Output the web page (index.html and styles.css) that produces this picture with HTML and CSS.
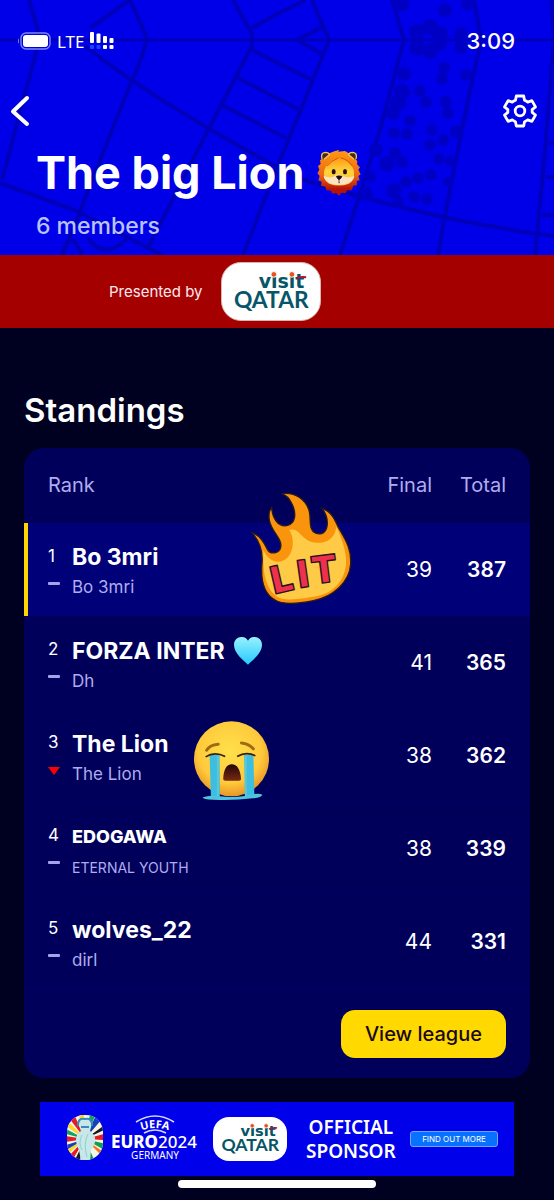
FILE: index.html
```html
<!DOCTYPE html>
<html lang="en">
<head>
<meta charset="utf-8">
<meta name="viewport" content="width=device-width, initial-scale=1">
<title>The big Lion</title>
<link rel="stylesheet" href="styles.css">
</head>
<body>
<header class="hero">
  <svg class="hero-map" viewBox="0 0 554 255" preserveAspectRatio="xMidYMid slice" aria-hidden="true">
    <g fill="none" stroke="#0000b9" stroke-width="4">
      <path stroke-width="3" d="M0 40H554"/>
      <path d="M29 0L40 38L22 105L2 180"/>
      <path d="M130 0L90 28M85 46Q130 82 208 128T305 180Q430 220 554 236"/>
      <path d="M130 0L147 38Q142 60 130 85L98 165L75 225L62 255"/>
      <path d="M0 183L75 210L162 255"/>
      <path d="M233 0L252 34L252 46L208 130L148 248"/>
      <path d="M252 28L277 14L306 0M252 50L312 80M238 78L300 110M222 105L286 138"/>
      <path d="M312 0L329 40L300 112L280 160L243 255"/>
      <path d="M322 27L297 40L322 54"/>
      <path d="M392 0L404 40L380 130L358 200L340 255"/>
      <path d="M474 0L481 40L466 110L445 215L438 255"/>
      <path d="M551 0L554 38L545 150L535 255M549 143H554M546 177H554M542 215H554"/>
      <path d="M62 255Q70 225 82 255M88 238Q105 262 127 238"/>
    </g>
    <g fill="#0000c4">
      <circle cx="401" cy="4" r="8"/><circle cx="445" cy="10" r="7"/><circle cx="468" cy="4" r="7"/>
      <circle cx="417" cy="32" r="8"/><circle cx="430" cy="27" r="8"/><circle cx="440" cy="34" r="8"/><circle cx="417" cy="48" r="8"/><circle cx="430" cy="51" r="8"/><circle cx="439" cy="43" r="8"/>
      <circle cx="461" cy="34" r="7"/><circle cx="461" cy="47" r="7"/><circle cx="404" cy="74" r="7"/>
      <circle cx="444" cy="68" r="6"/><circle cx="442" cy="79" r="6"/><circle cx="466" cy="75" r="6"/>
      <circle cx="402" cy="92" r="8"/><circle cx="398" cy="103" r="8"/><circle cx="393" cy="113" r="7"/>
      <circle cx="420" cy="91" r="6"/><circle cx="426" cy="102" r="6"/><circle cx="446" cy="102" r="6"/><circle cx="448" cy="113" r="6"/>
      <circle cx="410" cy="121" r="6"/><circle cx="407" cy="134" r="6"/><circle cx="394" cy="133" r="6"/>
      <circle cx="432" cy="130" r="6"/><circle cx="430" cy="145" r="6"/><circle cx="443" cy="140" r="6"/><circle cx="457" cy="132" r="7"/>
      <circle cx="376" cy="150" r="7"/><circle cx="395" cy="153" r="6"/><circle cx="387" cy="164" r="8"/><circle cx="402" cy="162" r="6"/>
      <circle cx="439" cy="159" r="6"/><circle cx="450" cy="161" r="5"/><circle cx="370" cy="177" r="6"/><circle cx="406" cy="182" r="6"/>
      <circle cx="418" cy="178" r="6"/><circle cx="431" cy="175" r="6"/><circle cx="394" cy="191" r="8"/><circle cx="414" cy="197" r="6"/><circle cx="427" cy="199" r="6"/>
      <circle cx="366" cy="194" r="7"/><circle cx="448" cy="182" r="5"/><circle cx="398" cy="202" r="6"/>
    </g>
  </svg>

  <div class="status">
    <svg width="34" height="18" viewBox="0 0 34 18" role="img" aria-label="Battery full">
      <path d="M2 6Q0 9 2 12Z" fill="#7888ff"/>
      <rect x="4" y="1" width="29" height="16" rx="5" fill="none" stroke="#7e86f4" stroke-width="1.4"/>
      <rect x="6" y="3" width="25" height="12" rx="3" fill="#fff"/>
    </svg>
    <span class="network">LTE</span>
    <svg width="24" height="18" viewBox="0 0 24 18" role="img" aria-label="Signal">
      <g fill="#fff"><rect width="4" height="11" rx="1"/><rect x="6.500" y="1.500" width="4" height="9.500" rx="1"/><rect x="13" y="4" width="4" height="7" rx="1"/><rect x="19.500" y="6" width="4" height="5" rx="1"/><rect x="13" y="13" width="4" height="4" rx="1"/><rect x="19.500" y="13" width="4" height="4" rx="1"/></g>
      <g fill="#1746ff"><rect y="13" width="4" height="4" rx="1"/><rect x="6.500" y="13" width="4" height="4" rx="1"/></g>
    </svg>
    <time class="clock">3:09</time>
  </div>

  <nav class="toolbar">
    <button class="icon-button" type="button" aria-label="Back">
      <svg width="20" height="32" viewBox="0 0 20 32"><path d="M17 3L3 16.500L17 29" fill="none" stroke="#fff" stroke-width="4" stroke-linecap="round" stroke-linejoin="round"/></svg>
    </button>
    <button class="icon-button" type="button" aria-label="Settings">
      <svg width="34" height="34" viewBox="0 0 34 34" fill="none" stroke="#fff" stroke-width="2.800" stroke-linejoin="round">
        <path d="M13.300 2H20.700L21.500 6.300Q23.200 7 24.700 8.100L28.900 6.600L32.500 12.900L29.100 15.700Q29.300 17 29.100 18.300L32.500 21.100L28.900 27.400L24.700 25.900Q23.200 27 21.500 27.700L20.700 32H13.300L12.500 27.700Q10.800 27 9.300 25.900L5.100 27.400L1.500 21.100L4.900 18.300Q4.700 17 4.900 15.700L1.500 12.900L5.100 6.600L9.300 8.100Q10.800 7 12.500 6.300Z"/>
        <circle cx="17" cy="17" r="4.800"/>
      </svg>
    </button>
  </nav>

  <div class="title-block">
    <h1>The big Lion
      <svg class="lion" viewBox="0 0 132 138" role="img" aria-label="lion">
        <defs><linearGradient id="mane" x2="0" y2="1"><stop offset="0" stop-color="#ff9b13"/><stop offset=".55" stop-color="#ee6512"/><stop offset=".85" stop-color="#b51407"/></linearGradient>
        <linearGradient id="face" x2="0" y2="1"><stop offset="0" stop-color="#ff9a16"/><stop offset=".5" stop-color="#ffd33b"/><stop offset="1" stop-color="#ffc12d"/></linearGradient></defs>
        <path d="M52 4L66 0L64 5L84 3L94 9L106 14L114 25L121 34L120 43L129 52L124 59L131 73L124 78L128 91L119 93L120 106L109 107L104 121L91 121L85 130L73 128L66 138L58 129L46 131L42 122L28 121L25 110L12 107L14 95L4 91L8 78L1 70L7 59L3 48L11 42L9 31L20 23L31 12Z" fill="url(#mane)"/>
        <path d="M15 27Q10 8 25 7Q36 7 37 14L21 28M117 27Q122 8 107 7Q96 7 95 14L111 28" fill="#4a2c0c" stroke="#f0c765" stroke-width="4"/>
        <path d="M66 23Q100 31 110 60Q116 89 96 101Q66 112 36 101Q16 89 22 60Q32 31 66 23" fill="url(#face)"/>
        <path d="M20 78Q40 86 53 79Q66 68 79 79Q92 86 112 78Q108 104 66 105Q24 104 20 78" fill="#fbe3c4"/>
        <ellipse cx="50" cy="65" rx="6" ry="8" fill="#211207"/><ellipse cx="84" cy="65" rx="6" ry="8" fill="#211207"/>
        <path d="M58 79Q66 76 75 79Q73 86 66 89Q60 86 58 79M66 88V96M64 98H69" fill="#180c09" stroke="#180c09" stroke-width="2"/>
        <path d="M64 24Q45 31 30 48M70 24Q92 27 106 48" stroke="#d05a0c" stroke-width="3" fill="none"/>
      </svg>
    </h1>
    <p class="members">6 members</p>
  </div>
</header>

<aside class="presenter">
  <span>Presented by</span>
  <svg class="pill" viewBox="0 0 100 60" role="img" aria-label="Visit Qatar">
    <text class="qatar-visit" x="37" y="26">visit</text>
    <text class="qatar-name" x="11" y="47">QATAR</text>
    <g fill="#e8501c" stroke="#fff" stroke-width="1"><circle cx="53" cy="12" r="3"/><circle cx="72" cy="12" r="3"/></g>
    <path d="M77 16q5-2 10-1" fill="none" stroke="#b0123b" stroke-width="2"/>
  </svg>
</aside>

<main>
  <h2>Standings</h2>
  <section class="card">
    <table>
      <thead>
        <tr><th class="rank-head" colspan="2" scope="col">Rank</th><th class="final" scope="col">Final</th><th class="total" scope="col">Total</th></tr>
      </thead>
      <tbody>
        <tr class="current">
          <td class="rank"><span>1</span><i class="same"></i></td>
          <td class="team"><strong>Bo 3mri</strong><p>Bo 3mri</p></td>
          <td class="final">39</td><td class="total">387</td>
        </tr>
        <tr>
          <td class="rank"><span>2</span><i class="same"></i></td>
          <td class="team"><strong>FORZA INTER
            <svg class="heart" viewBox="0 0 84 84" role="img" aria-label="light blue heart"><defs><linearGradient id="ice" x2="0" y2="1"><stop offset="0" stop-color="#96f2ff"/><stop offset="1" stop-color="#26c9fc"/></linearGradient></defs><path d="M42 83C29 70 0 49 0 23C0-3 34-7 42 11C50-7 84-3 84 23C84 49 55 70 42 83Z" fill="url(#ice)"/></svg></strong><p>Dh</p></td>
          <td class="final">41</td><td class="total">365</td>
        </tr>
        <tr>
          <td class="rank"><span>3</span><i class="down"></i></td>
          <td class="team"><strong>The Lion</strong><p>The Lion</p></td>
          <td class="final">38</td><td class="total">362</td>
        </tr>
        <tr>
          <td class="rank"><span>4</span><i class="same"></i></td>
          <td class="team"><strong><span class="caps-name">EDOGAWA</span></strong><p><span class="caps-owner">ETERNAL YOUTH</span></p></td>
          <td class="final">38</td><td class="total">339</td>
        </tr>
        <tr>
          <td class="rank"><span>5</span><i class="same"></i></td>
          <td class="team"><strong>wolves_22</strong><p>dirl</p></td>
          <td class="final">44</td><td class="total">331</td>
        </tr>
      </tbody>
    </table>
    <div class="card-footer"><button class="league-button" type="button">View league</button></div>

    <svg class="sticker fire" viewBox="0 0 360 375" role="img" aria-label="Lit">
      <path d="M36 143C60 150 73 173 82 193C91 210 118 206 122 187C128 162 94 140 88 106C85 88 90 73 95 67C97 101 115 126 140 122C168 117 170 84 155 55C147 38 138 30 125 26C165 20 200 45 208 80C214 105 205 125 220 140C235 152 257 148 261 124C264 105 258 85 246 70C275 80 285 105 295 127C315 162 335 190 332 238C328 292 280 335 220 347C170 357 125 358 105 345C70 325 62 280 66 235C69 200 60 170 36 143Z" fill="#fa940c" stroke="#281b20" stroke-width="4"/>
      <path d="M70 195C80 218 102 237 127 228C160 216 167 165 148 135C175 128 180 155 205 167C235 181 283 175 289 125C301 151 322 201 318 240C310 299 270 330 215 336C170 343 130 348 112 336C75 310 68 260 70 195Z" fill="#ffca45"/>
      <g class="lit"><text x="103" y="328" transform="rotate(-13 103 328)">L</text><text x="178" y="309" transform="rotate(-8 178 309)">I</text><text x="219" y="298" transform="rotate(-7 219 298)">T</text></g>
    </svg>

    <svg class="sticker crying" viewBox="0 0 230 238" role="img" aria-label="loudly crying face">
      <defs><radialGradient id="cry-face" cx=".48" cy=".4" r=".6"><stop offset="0" stop-color="#ffe04b"/><stop offset=".7" stop-color="#ffca3c"/><stop offset="1" stop-color="#e99625"/></radialGradient><linearGradient id="mouth" x2="0" y2="1"><stop offset="0" stop-color="#230706"/><stop offset="1" stop-color="#782a12"/></linearGradient></defs>
      <circle cx="115" cy="114" r="113" fill="url(#cry-face)"/>
      <path d="M40 88Q50 72 75 70M145 66Q168 68 181 84" fill="none" stroke="#a06a12" stroke-width="9" stroke-linecap="round"/>
      <path d="M49 102H79L80 230H53ZM153 102H181L184 230H156Z" fill="#3dbde0"/>
      <path d="M28 230Q44 226 56 225L80 227Q118 231 154 226L182 220Q200 217 208 222Q205 231 180 233Q120 240 60 237Q29 237 28 230" fill="#4dc3dd"/>
      <path d="M74 104V226M158 104V226" stroke="#5ac8d8" stroke-width="6"/>
      <path d="M37 108Q64 91 96 107M132 107Q159 91 187 105" fill="none" stroke="#39200e" stroke-width="5"/>
      <path d="M90 175Q92 130 116 130Q140 130 144 175Q144 181 135 180H99Q90 181 90 175" fill="url(#mouth)"/>
    </svg>
  </section>
</main>

<footer>
  <a class="banner" href="#sponsor">
    <svg class="euro" viewBox="0 0 134 50" role="img" aria-label="UEFA Euro 2024 Germany">
      <defs><clipPath id="badge"><rect x="1" y="1" width="36" height="45" rx="17"/></clipPath><path id="arc" d="M71 18Q89 10 107 18"/></defs>
      <g clip-path="url(#badge)">
        <rect width="40" height="50" fill="#f7f6e6"/>
        <path d="M19 25L12-2H18ZM19 25L0 12V5ZM19 25L0 42V36Z" fill="#ffd52c"/>
        <path d="M19 25L3 4L8 0ZM19 25L0 28V22ZM19 25L4 50L0 45ZM19 25L38 20V26Z" fill="#e51c23"/>
        <path d="M19 25L0 20V15ZM19 25L24 0H30Z" fill="#12a363"/>
        <path d="M19 25L30 1L36 5ZM19 25L0 36V31Z" fill="#1742b7"/>
        <path d="M19 25L40 10V15ZM19 25L7 50H13Z" fill="#161a24"/>
        <path d="M19 25L40 30V37ZM19 25L30 50H24Z" fill="#119f4a"/>
        <path d="M19 25L40 40V46Z" fill="#ed7820"/>
        <path d="M12 9Q19 0 26 9L24 17Q34 24 25 36L24 47H15L13 36Q6 23 15 17Z" fill="#c7e7e8"/>
        <path d="M12 12Q12 3 19 5Q26 3 26 12M15 13H23" fill="none" stroke="#378bbd" stroke-width="2"/>
        <path d="M16 21Q12 29 16 36M22 20Q17 30 21 43" fill="none" stroke="#8bcfd2"/>
      </g>
      <path d="M70 8Q89-4 108 8M78 19Q89 13 100 19" fill="none" stroke="#d8dbff" stroke-width="1.500"/>
      <text class="uefa"><textPath href="#arc" startOffset="50%" text-anchor="middle">UEFA</textPath></text>
      <text class="euro-name" x="45" y="34">EURO<tspan class="year">2024</tspan></text>
      <text class="germany" x="89" y="45" text-anchor="middle">GERMANY</text>
    </svg>
    <svg class="pill pill-small" viewBox="0 0 100 60" role="img" aria-label="Visit Qatar">
      <text class="qatar-visit" x="37" y="26">visit</text>
      <text class="qatar-name" x="11" y="47">QATAR</text>
      <g fill="#e8501c" stroke="#fff" stroke-width="1"><circle cx="53" cy="12" r="3"/><circle cx="72" cy="12" r="3"/></g>
      <path d="M77 16q5-2 10-1" fill="none" stroke="#b0123b" stroke-width="2"/>
    </svg>
    <span class="sponsor">OFFICIAL<br>SPONSOR</span>
    <span class="find">FIND OUT MORE</span>
  </a>
  <div class="home-indicator"></div>
</footer>
</body>
</html>
```

FILE: styles.css
```css
* { box-sizing: border-box; }
body {
  margin: 0;
  background: #000020;
  color: #fff;
  font-family: Inter, "Liberation Sans", sans-serif;
}
h1, h2, p { margin: 0; }
button { font: inherit; border: 0; cursor: pointer; }
svg { display: block; flex: none; }

.hero {
  position: relative;
  background: #0000e8;
  padding: 30px 17px 13px;
}
.hero-map { position: absolute; inset: 0; width: 100%; height: 100%; }
.status, .toolbar, .title-block { position: relative; }
.status { display: flex; align-items: center; gap: 6px; height: 22px; padding-right: 22px; }
.network { font: 17px "Noto Sans", sans-serif; }
.clock { margin-left: auto; font-size: 22px; font-weight: 500; }
.toolbar { display: flex; justify-content: space-between; align-items: center; height: 34px; margin: 42px 0 19px; }
.toolbar .icon-button:first-child { margin-left: -7px; }
.icon-button { padding: 0; background: none; }
.title-block { padding-left: 19px; }
h1 { display: flex; align-items: center; gap: 13px; font-size: 45px; line-height: 52px; font-weight: 700; }
.lion { width: 44px; height: 46px; }
.members { margin-top: 11px; font-size: 23px; line-height: 32px; font-weight: 500; color: #b9c3ff; }

.presenter {
  display: flex;
  align-items: center;
  padding: 7px 109px;
  gap: 19px;
  background: #a40000;
  color: #ffe9ee;
  font-size: 15px;
}
.pill { width: 100px; height: 59px; border: 1px solid #d6b6af; border-radius: 20px; background: #fff; }
.qatar-visit { font: 700 20px "DejaVu Sans", sans-serif; fill: #075568; }
.qatar-name { font: 700 24px Lato, sans-serif; fill: #075568; }

main { padding: 60px 24px 24px; }
h2 { margin-bottom: 16px; font-size: 33px; line-height: 44px; font-weight: 600; }
.card { position: relative; border-radius: 20px; background: #00005b; }
table { width: 100%; border-collapse: collapse; table-layout: auto; }
th { height: 75px; padding: 0 0 2px; font-size: 20px; font-weight: 400; color: #b0acee; }
td { height: 93px; padding: 0; }
.rank-head { padding-left: 24px; text-align: left; }
.rank { width: 48px; padding: 21px 0 0 24px; vertical-align: top; font-size: 17px; line-height: 24px; }
.rank span { display: block; }
.same { display: block; width: 12px; height: 3px; margin-top: 14px; border-radius: 1px; background: #a5a2ed; }
.down { display: block; width: 12px; height: 8px; margin-top: 13px; background: #f00; clip-path: polygon(0 0, 100% 0, 50% 100%); }
.team { padding-top: 20px; vertical-align: top; }
.team strong { display: flex; align-items: baseline; gap: 9px; height: 28px; font-size: 23px; line-height: 28px; font-weight: 700; }
.team p { height: 24px; margin-top: 4px; font-size: 17px; line-height: 24px; color: #b0acee; }
.team .caps-name { font-size: 18px; font-weight: 800; }
.team .caps-owner { font-size: 14px; }
.heart { align-self: center; width: 28px; height: 28px; }
td.final, td.total { font-size: 21px; }
.final { width: 80px; text-align: right; }
.total { width: 98px; padding-right: 24px; text-align: right; }
td.total { font-weight: 600; }
.current { background: #000078; }
.current .rank { box-shadow: inset 4px 0 #ffd600; }
tbody tr + tr td:not(.rank) { border-top: 1px solid #000064; }
.card-footer { display: flex; justify-content: flex-end; padding: 21px 24px 20px; border-top: 1px solid #000068; }
.league-button { height: 48px; padding: 0 24px; border-radius: 14px; background: #ffd900; color: #180912; font-size: 20px; font-weight: 500; }
.sticker { position: absolute; }
.fire { left: 216px; top: 37px; width: 120px; height: 125px; }
.crying { left: 169px; top: 273px; width: 77px; height: 79px; }
.lit { font: 900 114px Inter, sans-serif; fill: #ee304f; stroke: #251319; stroke-width: 4px; stroke-linejoin: round; }

footer { padding: 0 40px 12px; }
.banner { display: flex; align-items: center; height: 74px; padding: 0 16px 0 26px; background: #0000ea; color: #fff; text-decoration: none; }
.euro { width: 134px; height: 50px; fill: #fff; }
.uefa { font: 700 11px "Noto Sans", sans-serif; }
.euro-name { font: 800 17px "Noto Sans", sans-serif; }
.year { font-weight: 500; }
.germany { font: 10px "Noto Sans", sans-serif; }
.pill-small { width: 74px; height: 44px; margin-left: 13px; border: 0; border-radius: 16px; }
.sponsor { margin-left: 19px; font: 600 19px/24px "Noto Sans", sans-serif; text-align: center; }
.find { margin-left: auto; width: 88px; border: 1px solid #70a3ff; border-radius: 3px; background: #0871ff; font: 8px/14px Inter, sans-serif; text-align: center; white-space: nowrap; }
.home-indicator { width: 198px; height: 8px; margin: 4px auto 0; border-radius: 4px; background: #fff; }
```
